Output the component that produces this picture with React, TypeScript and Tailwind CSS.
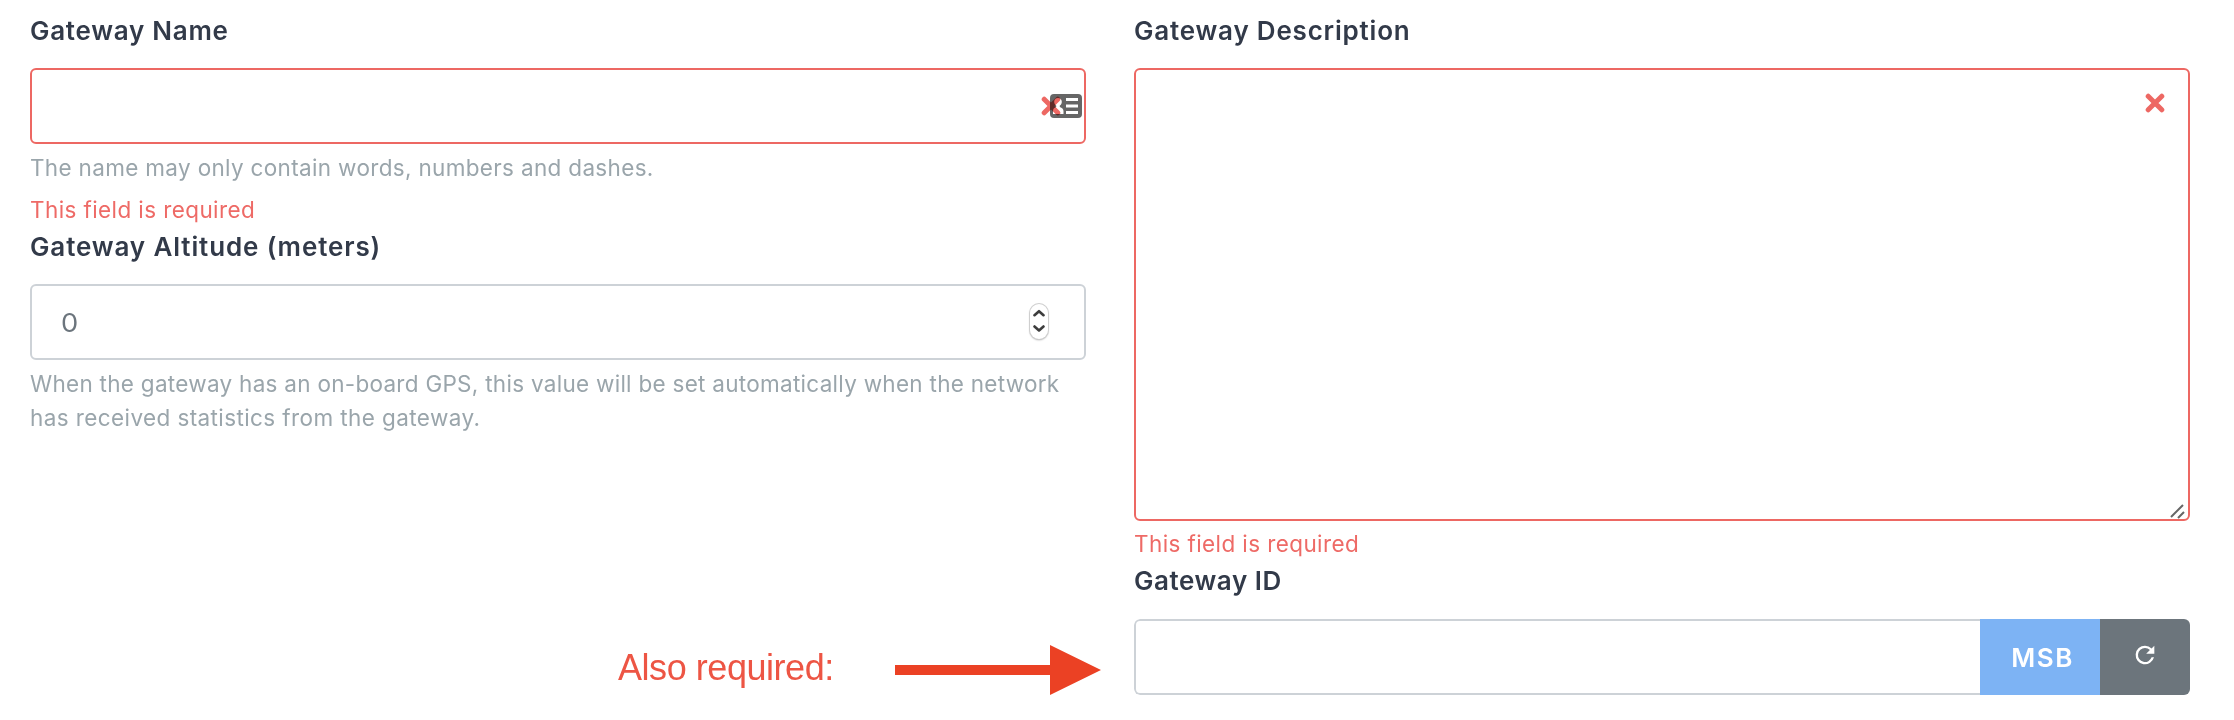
function Label({ children, className = "" }: { children: string; className?: string }) {
  return <label className={`block h-[38px] text-[26px] leading-[38px] font-semibold whitespace-nowrap text-[#323a49] ${className}`}>{children}</label>;
}

function Cross({ className = "" }: { className?: string }) {
  return (
    <svg className={`absolute size-5 ${className}`} viewBox="0 0 20 20" fill="none" stroke="#ed6863" strokeWidth="5" strokeLinecap="round">
      <path d="M3.200 3.200 16.800 16.800M16.800 3.200 3.200 16.800" />
    </svg>
  );
}

const help = "text-[22.5px] leading-[34px] text-[#9aa5ab] whitespace-nowrap";
const error = "text-[22.5px] leading-[34px] tracking-[0.4px] text-[#ee6a66] whitespace-nowrap";

export default function App() {
  return (
    <div className="relative h-[720px] w-[2234px] overflow-hidden bg-white pt-3 pr-11 pl-[30px] font-['Inter',sans-serif]">
      <div className="flex gap-12">
        <section className="w-[1056px]">
          <Label className="tracking-[0.73px]">Gateway Name</Label>
          <div className="relative mt-[18px] h-[76px] rounded-[6px] border-2 border-[#ed6863] bg-white">
            <Cross className="top-[25.500px] left-[1008.500px]" />
            <svg className="absolute top-[24px] left-[1018px] h-6 w-8 mix-blend-multiply" viewBox="0 0 32 24">
              <path
                fill="#666"
                fillRule="evenodd"
                d="M4 0h24a4 4 0 0 1 4 4v16a4 4 0 0 1-4 4H4a4 4 0 0 1-4-4V4a4 4 0 0 1 4-4ZM16 4v3h12V4ZM16 10.500v3h12v-3ZM16 17v3h12v-3ZM8 4C5.800 4 4.200 5.600 4.200 7.700c0 1.700.8 3.100 2 3.900v1.300C4 13.700 3 15 3 17v3h10.500v-3c0-2-1.500-3.300-3.700-4.100v-1.300c1.300-.8 2-2.200 2-3.900C11.800 5.600 10.200 4 8 4Z"
              />
            </svg>
          </div>
          <p className={`mt-[7px] tracking-[0.33px] ${help}`}>The name may only contain words, numbers and dashes.</p>
          <p className={`mt-[8px] ${error}`}>This field is required</p>
          <Label className="mt-px tracking-[0.88px]">Gateway Altitude (meters)</Label>
          <div className="mt-[18px] flex h-[76px] items-center justify-between rounded-[6px] border-2 border-[#cdd2d7] bg-white pr-[36px] pl-[29px]">
            <span className="origin-left scale-x-105 pt-px text-[26px] leading-[38px] text-[#6c757d]">0</span>
            <span className="flex h-[35px] w-[18px] -translate-y-px items-center justify-center rounded-full bg-white shadow-[0_0_0_1px_#cfcfcf,0_1px_2px_#999]">
              <svg className="h-6 w-3" viewBox="0 0 12 24" fill="none" stroke="#3d3d3d" strokeWidth="2.600" strokeLinecap="round" strokeLinejoin="round">
                <path d="M1.500 6.200 6 2.200l4.500 4M1.500 17.500 6 21.500l4.500-4" />
              </svg>
            </span>
          </div>
          <p className={`mt-[7px] ${help}`}>
            <span className="tracking-[0.28px]">When the gateway has an on-board GPS, this value will be set automatically when the network</span>
            <br />
            <span className="tracking-[0.4px]">has received statistics from the gateway.</span>
          </p>
        </section>
        <section className="w-[1056px]">
          <Label className="tracking-[0.8px]">Gateway Description</Label>
          <div className="relative mt-[18px] h-[453px] rounded-[6px] border-2 border-[#ed6863] bg-white">
            <Cross className="top-[23px] left-[1008.500px]" />
            <svg className="absolute right-0.5 bottom-0 size-4" viewBox="0 0 16 16" stroke="#666" strokeWidth="2">
              <path d="M1 14 13 2M8 15l6-6" />
            </svg>
          </div>
          <p className={`mt-[6px] ${error}`}>This field is required</p>
          <Label className="mt-px tracking-[0.55px]">Gateway ID</Label>
          <div className="mt-[19px] flex h-[76px] overflow-hidden rounded-[6px]">
            <div className="flex-1 rounded-l-[6px] border-2 border-r-0 border-[#cdd2d7] bg-white" />
            <button className="w-[120px] bg-[#7db3f4] pl-[5px] text-[26px] font-semibold tracking-[1.5px] text-white">MSB</button>
            <button className="flex w-[90px] items-center justify-center bg-[#6c757c]">
              <svg className="size-[28px] -translate-y-0.5" viewBox="0 0 24 24" fill="white">
                <path d="M17.650 6.350A7.958 7.958 0 0 0 12 4a8 8 0 1 0 7.730 10h-2.080A6 6 0 1 1 12 6c1.660 0 3.140.690 4.220 1.780L13 11h7V4z" />
              </svg>
            </button>
          </div>
        </section>
      </div>
      <div className="absolute top-[645px] left-[618px] flex h-[50px] items-center">
        <span className="w-[277px] pb-[5px] font-['Liberation_Sans',sans-serif] text-[36px] leading-[42px] tracking-[-0.45px] whitespace-nowrap text-[#ed5544]">Also required:</span>
        <svg className="h-[50px] w-[206px]" viewBox="0 0 206 50" fill="#eb4124">
          <path d="M0 20h155V0l51 25-51 25V30H0z" />
        </svg>
      </div>
    </div>
  );
}
